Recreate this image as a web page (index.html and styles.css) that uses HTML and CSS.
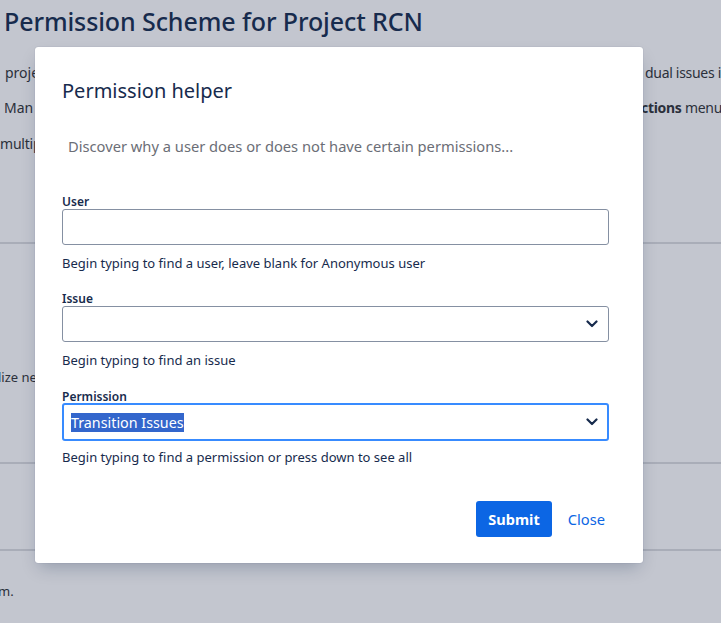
FILE: index.html
```html
<!DOCTYPE html>
<html>
<head>
<meta charset="utf-8">
<link rel="stylesheet" href="styles.css">
</head>
<body>
<div class="page">
  <h1 class="page-title">Permission Scheme for Project RCN</h1>
  <div class="bg-line l1"><span class="left">proje</span><span class="right">dual issues in</span></div>
  <div class="bg-line l2"><span class="left">Man</span><span class="right r-shift"><b>ctions</b> menu</span></div>
  <div class="bg-line l3"><span class="left">multip</span></div>
  <div class="rule r1"></div>
  <div class="bg-line l4"><span class="left">lize ne</span></div>
  <div class="rule r2"></div>
  <div class="rule r3"></div>
  <div class="bg-line l5"><span class="left">m.</span></div>
</div>

<div class="modal">
  <h2 class="modal-title">Permission helper</h2>
  <p class="modal-desc">Discover why a user does or does not have certain permissions...</p>
  <form class="form">
    <div class="field">
      <label class="label">User</label>
      <div class="input"></div>
      <div class="help">Begin typing to find a user, leave blank for Anonymous user</div>
    </div>
    <div class="field field-issue">
      <label class="label">Issue</label>
      <div class="input select"><span class="chev"><svg width="12" height="8" viewBox="0 0 12 8"><path d="M1.5 1.5 L6 6 L10.5 1.5" fill="none" stroke="#172b4d" stroke-width="2.2" stroke-linecap="round" stroke-linejoin="round"/></svg></span></div>
      <div class="help">Begin typing to find an issue</div>
    </div>
    <div class="field">
      <label class="label">Permission</label>
      <div class="input select focus"><span class="value">Transition Issues</span><span class="chev"><svg width="12" height="8" viewBox="0 0 12 8"><path d="M1.5 1.5 L6 6 L10.5 1.5" fill="none" stroke="#172b4d" stroke-width="2.2" stroke-linecap="round" stroke-linejoin="round"/></svg></span></div>
      <div class="help">Begin typing to find a permission or press down to see all</div>
    </div>
    <div class="actions">
      <button type="button" class="btn-primary">Submit</button>
      <a class="link">Close</a>
    </div>
  </form>
</div>
</body>
</html>
```

FILE: styles.css
```css
html, body {
  margin: 0;
  padding: 0;
  width: 721px;
  height: 623px;
  overflow: hidden;
  background: #c3c6cf;
  font-family: "Noto Sans", "Open Sans", sans-serif;
  color: #172b4d;
}
.page {
  position: relative;
  height: 623px;
  overflow: hidden;
}
.page-title {
  margin: 0;
  padding: 4px 0 0 4px;
  font-size: 25px;
  font-weight: 500;
  color: #172b4d;
  line-height: 34px;
  letter-spacing: -0.1px;
}
.bg-line {
  display: grid;
  grid-template-columns: 644px 200px;
  white-space: nowrap;
  font-size: 14px;
  color: #2b303b;
  line-height: 20px;
}
.bg-line .left { overflow: hidden; }
.bg-line .right { letter-spacing: -0.3px; }
.r-shift { margin-left: -3px; }
.l1 { margin-top: 25px; padding-left: 5px; grid-template-columns: 640px 200px; }
.l2 { margin-top: 15px; padding-left: 4px; grid-template-columns: 640px 200px; }
.l3 { margin-top: 16px; padding-left: 0; letter-spacing: -0.2px; }
.rule {
  height: 2px;
  background: #a9adb8;
}
.r1 { margin-top: 88px; }
.l4 { margin-top: 123px; font-size: 13px; margin-left: -2px; }
.r2 { margin-top: 75px; }
.r3 { margin-top: 85px; }
.l5 { margin-top: 30px; font-size: 13px; margin-left: -2px; }

.modal {
  position: absolute;
  left: 35px;
  top: 47px;
  width: 608px;
  height: 516px;
  box-sizing: border-box;
  background: #fff;
  border-radius: 3px;
  box-shadow: 0 8px 16px -4px rgba(9,30,66,0.25), 0 0 1px rgba(9,30,66,0.31);
  padding: 28px 34px 0 27px;
}
.modal-title {
  margin: 0;
  font-size: 20px;
  font-weight: 400;
  line-height: 32px;
  color: #172b4d;
}
.modal-desc {
  margin: 29px 0 0 6px;
  font-size: 14.7px;
  line-height: 20px;
  color: #6b6e76;
}
.form {
  margin-top: 38px;
}
.field {
  display: flex;
  flex-direction: column;
  margin-bottom: 19px;
}
.field-issue { margin-bottom: 20px; }
.label {
  font-size: 12px;
  font-weight: 600;
  line-height: 16px;
  color: #172b4d;
  margin-bottom: -1px;
}
.input {
  height: 36px;
  box-sizing: border-box;
  border: 1px solid #8590a2;
  border-radius: 3px;
  background: #fff;
  display: flex;
  align-items: center;
  padding: 0 8px;
}
.select { justify-content: space-between; }
.chev { display: flex; margin-left: auto; margin-right: 2px; }
.focus {
  border: 2px solid #388bff;
  height: 38px;
  padding: 0 7px;
  margin-top: -1px;
}
.value {
  background: #3366cc;
  color: #fff;
  font-size: 14.3px;
  line-height: 19px;
}
.help {
  font-size: 13px;
  line-height: 18px;
  color: #172b4d;
  margin-top: 9px;
}
.focus + .help { margin-top: 7px; }
.actions {
  display: flex;
  justify-content: flex-end;
  align-items: center;
  gap: 16px;
  margin-top: 35px;
}
.btn-primary {
  height: 36px;
  padding: 0 12px;
  border: none;
  border-radius: 3px;
  background: #0c66e4;
  color: #fff;
  font-family: inherit;
  font-size: 14.5px;
  font-weight: 700;
}
.link {
  color: #0c66e4;
  font-size: 14.7px;
  margin-right: 4px;
}
```
